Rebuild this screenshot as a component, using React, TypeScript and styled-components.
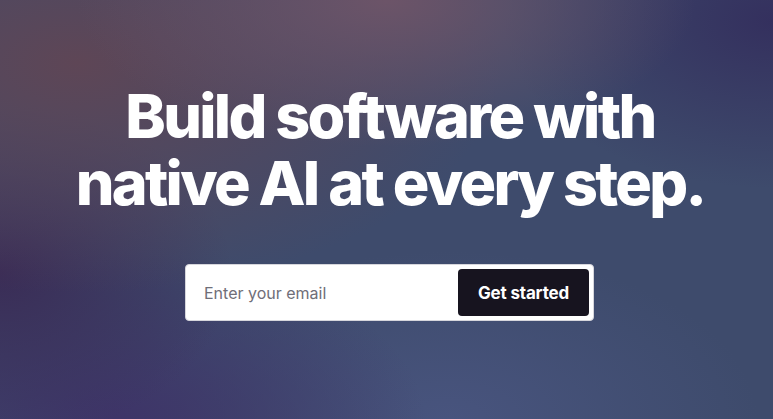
import React from 'react';
import styled, { createGlobalStyle } from 'styled-components';

const GlobalStyle = createGlobalStyle`
  html, body {
    margin: 0;
    padding: 0;
  }
  body {
    font-family: Inter, "Noto Sans", sans-serif;
  }
  * {
    box-sizing: border-box;
  }
`;

const Hero = styled.section`
  width: 100%;
  height: 419px;
  overflow: hidden;
  display: flex;
  flex-direction: column;
  align-items: center;
  padding-top: 83px;
  background-color: #3e4b6c;
  background-image:
    radial-gradient(ellipse 40% 35% at 50% 0%, rgba(108, 84, 104, 1), rgba(108, 84, 104, 0) 100%),
    radial-gradient(ellipse 55% 55% at 10% 15%, rgba(94, 70, 86, 1), rgba(94, 70, 86, 0) 100%),
    radial-gradient(ellipse 30% 40% at 0% 65%, rgba(58, 44, 86, 1), rgba(58, 44, 86, 0) 100%),
    radial-gradient(ellipse 35% 40% at 100% 5%, rgba(52, 48, 94, 1), rgba(52, 48, 94, 0) 100%),
    radial-gradient(ellipse 40% 40% at 15% 100%, rgba(62, 52, 104, 1), rgba(62, 52, 104, 0) 100%),
    radial-gradient(ellipse 40% 40% at 58% 100%, rgba(72, 84, 126, 1), rgba(72, 84, 126, 0) 100%);
`;

const Headline = styled.h1`
  margin: 0 0 0 7px;
  color: #ffffff;
  font-family: Inter, "Noto Sans", sans-serif;
  font-weight: 800;
  font-size: 61px;
  line-height: 67px;
  letter-spacing: -0.044em;
  text-align: center;
`;

const SignupForm = styled.form`
  margin-top: 47px;
  margin-left: 6px;
  width: 409px;
  height: 57px;
  display: flex;
  align-items: center;
  gap: 8px;
  padding: 4px 4px 4px 16px;
  background: #ffffff;
  border: 1px solid #d6d6dc;
  border-radius: 4px;
`;

const EmailInput = styled.input`
  flex: 1;
  min-width: 0;
  height: 100%;
  border: none;
  outline: none;
  background: transparent;
  font-family: Inter, "Noto Sans", sans-serif;
  font-size: 16px;
  color: #1b1925;

  &::placeholder {
    color: #6f6e78;
  }
`;

const SubmitButton = styled.button`
  width: 131px;
  height: 47px;
  border: none;
  border-radius: 4px;
  background: #17141f;
  color: #ffffff;
  font-family: Inter, "Noto Sans", sans-serif;
  font-weight: 700;
  font-size: 17px;
  letter-spacing: -0.01em;
  cursor: pointer;
`;

export default function App() {
  return (
    <>
      <GlobalStyle />
      <Hero>
        <Headline>
          Build software with
          <br />
          native AI at every step.
        </Headline>
        <SignupForm onSubmit={(e) => e.preventDefault()}>
          <EmailInput type="email" placeholder="Enter your email" />
          <SubmitButton type="submit">Get started</SubmitButton>
        </SignupForm>
      </Hero>
    </>
  );
}
